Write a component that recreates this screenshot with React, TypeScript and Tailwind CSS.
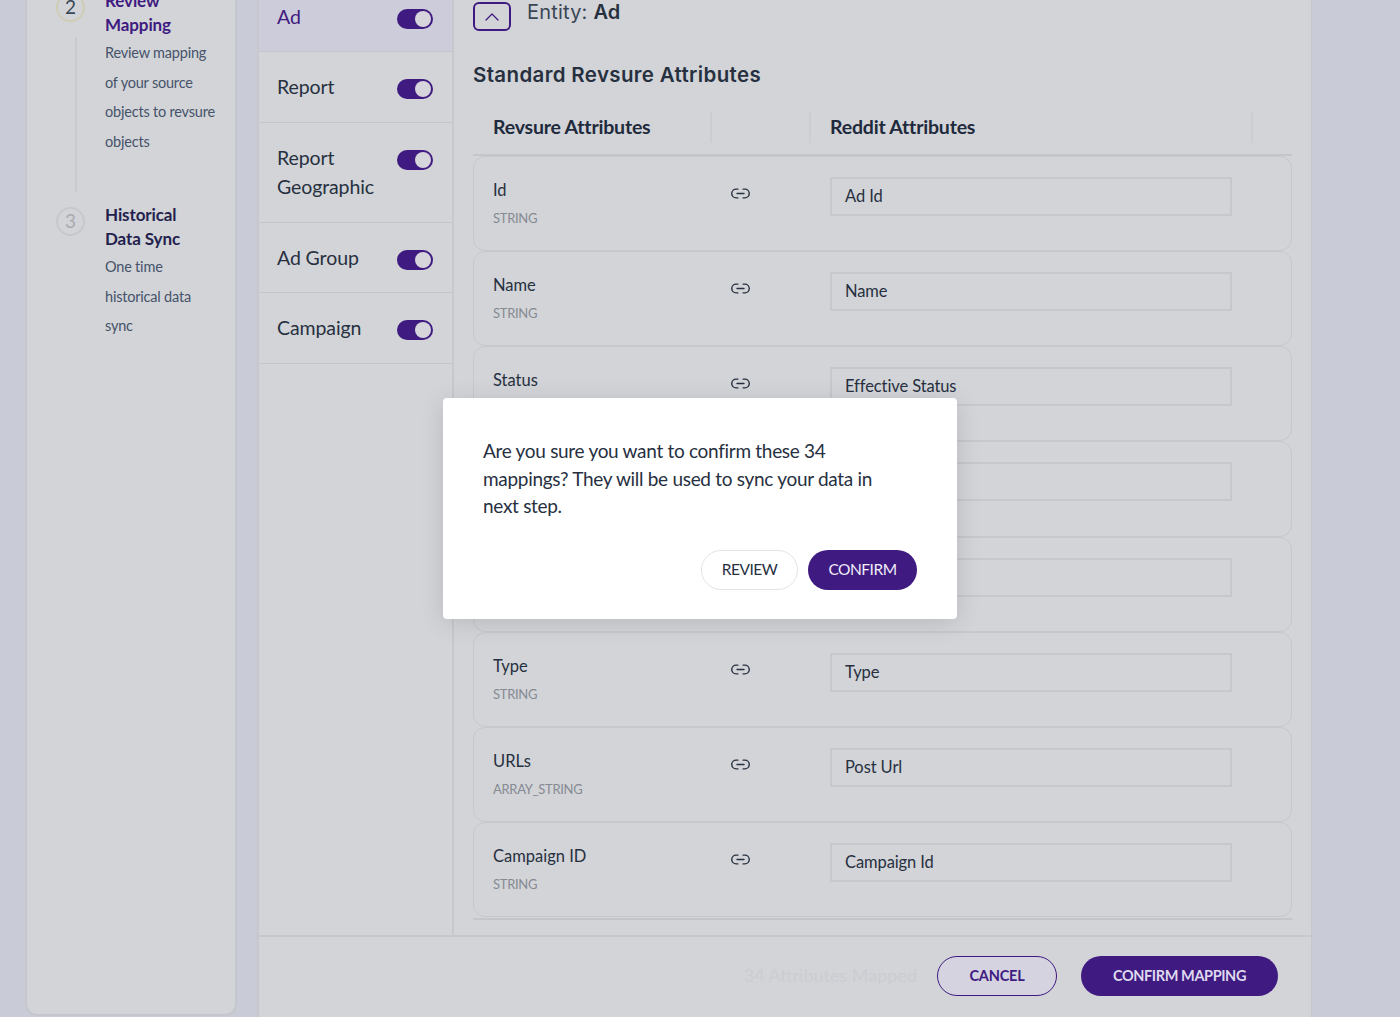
import { ChevronUp, Link2 } from 'lucide-react';

const ENTITIES = [
  { name: 'Ad', selected: true },
  { name: 'Report' },
  { name: 'Report Geographic' },
  { name: 'Ad Group' },
  { name: 'Campaign' },
];

// rows 4 and 5 sit behind the dialog, only their empty right part shows
const ATTRIBUTES = [
  { name: 'Id', type: 'STRING', value: 'Ad Id' },
  { name: 'Name', type: 'STRING', value: 'Name' },
  { name: 'Status', type: '', value: 'Effective Status' },
  { name: '', type: '', value: '' },
  { name: '', type: '', value: '' },
  { name: 'Type', type: 'STRING', value: 'Type' },
  { name: 'URLs', type: 'ARRAY_STRING', value: 'Post Url' },
  { name: 'Campaign ID', type: 'STRING', value: 'Campaign Id' },
];

const FONT = "font-['Lato','Noto_Sans',sans-serif]";

function Toggle() {
  return (
    <div className="mt-[7px] flex h-5 w-9 shrink-0 items-center justify-end rounded-full bg-[#3f1a80] pr-[2px]">
      <div className="h-4 w-4 rounded-full bg-[#d6d5dc]" />
    </div>
  );
}

function Step({ num, title, lines, active }: { num: number; title: string[]; lines: string[]; active?: boolean }) {
  return (
    <div className="flex">
      <div
        className={
          active
            ? 'mt-[4px] flex h-[29px] w-[29px] shrink-0 items-center justify-center rounded-full border-2 border-[#cfcdb5] text-[19px] text-[#3a4654]'
            : 'mt-[4px] flex h-[29px] w-[29px] shrink-0 items-center justify-center rounded-full border-2 border-[#c6c8cc] text-[19px] text-[#a9abb0]'
        }
      >
        {num}
      </div>
      <div className="ml-5">
        <div
          className={
            active
              ? 'text-[17px] leading-6 font-bold tracking-[-0.1px] text-[#3f1a80]'
              : 'text-[17px] leading-6 font-bold tracking-[-0.1px] text-[#241f4d]'
          }
        >
          {title.map((t) => (
            <div key={t}>{t}</div>
          ))}
        </div>
        <div className="mt-[1px] text-[14.5px] leading-[29.7px] tracking-[-0.2px] text-[#46536a]">
          {lines.map((l) => (
            <div key={l}>{l}</div>
          ))}
        </div>
      </div>
    </div>
  );
}

export default function App() {
  return (
    <div className={`relative flex h-[1017px] overflow-hidden bg-[#c9ccd6] pl-[25px] ${FONT}`}>
      {/* Stepper */}
      <div className="relative h-[1016px] w-[212px] shrink-0 overflow-hidden rounded-b-xl border-2 border-t-0 border-[#c4c7cd] bg-[#d2d4d8] pl-[29px]">
        <div className="-mt-[11px]">
          <Step
            num={2}
            active
            title={['Review', 'Mapping']}
            lines={['Review mapping', 'of your source', 'objects to revsure', 'objects']}
          />
        </div>
        <div className="mt-[46px]">
          <Step num={3} title={['Historical', 'Data Sync']} lines={['One time', 'historical data', 'sync']} />
        </div>
        <div className="absolute top-[37px] left-[48px] h-[155px] w-[2px] bg-[#c8cacf]" />
      </div>

      {/* Main */}
      <div className="ml-[20px] flex h-[1017px] w-[1055px] shrink-0 flex-col border-r border-l-2 border-r-[#c4c7cd] border-l-[#c6c8cd] bg-[#d2d4d8]">
        <div className="flex min-h-0 flex-1">
          {/* Entity list */}
          <div className="w-[195px] shrink-0 border-r-2 border-[#c6c8cd]">
            <div className="-mt-[18.5px]">
              {ENTITIES.map((e) => (
                <div
                  key={e.name}
                  className={
                    e.selected
                      ? 'flex items-start justify-between border-b border-[#c4c6cb] bg-[#cdccda] py-5 pr-[19px] pl-[18px] text-[19.5px] leading-[29.5px] tracking-[-0.1px] text-[#3f1a80]'
                      : 'flex items-start justify-between border-b border-[#c4c6cb] py-5 pr-[19px] pl-[18px] text-[19.5px] leading-[29.5px] tracking-[-0.1px] text-[#27303f]'
                  }
                >
                  <span className="w-[100px]">{e.name}</span>
                  <Toggle />
                </div>
              ))}
            </div>
          </div>

          {/* Attributes */}
          <div className="min-w-0 flex-1 px-[19px]">
            <div className="flex items-start pt-[2px]">
              <button className="flex h-[29px] w-[38px] items-center justify-center rounded-md border-2 border-[#3f1a80] text-[#3f1a80]">
                <ChevronUp size={24} strokeWidth={1.3} />
              </button>
              <div className="-mt-[4px] ml-4 font-['Inter',sans-serif] text-[20px] leading-7 tracking-[0.2px] text-[#3a4654]">
                Entity: <span className="font-semibold text-[#27303f]">Ad</span>
              </div>
            </div>
            <h2 className="mt-[30px] font-['Inter',sans-serif] text-[20.5px] leading-7 font-semibold tracking-[0.35px] text-[#27303f]">
              Standard Revsure Attributes
            </h2>
            <div className="mt-[23px] flex h-[44px] items-start border-b-2 border-[#c4c6cb] pl-5 text-[19.5px] leading-[29px] font-bold tracking-[-0.2px] text-[#1f2a3c]">
              <div className="h-[31px] w-[219px] border-r-2 border-[#cbcdd1]">Revsure Attributes</div>
              <div className="h-[31px] w-[99px] border-r-2 border-[#cbcdd1]" />
              <div className="h-[31px] w-[442px] border-r-2 border-[#cbcdd1] pl-[19px]">Reddit Attributes</div>
            </div>
            <div className="border-b-2 border-[#c4c6cb] pb-[1px]">
              {ATTRIBUTES.map((a, i) => (
                <div key={i} className="flex h-[95.14px] rounded-xl border border-[#c6c8cc] pt-[20px] pl-[19px]">
                  <div className="w-[237px] shrink-0">
                    <div className="-mt-px h-[28px] text-[16.5px] leading-7 text-[#27303f]">{a.name}</div>
                    <div className="mt-[4px] text-[13px] leading-5 tracking-[-0.3px] text-[#868a92]">{a.type}</div>
                  </div>
                  <Link2 size={21} strokeWidth={1.6} className="mt-[6px] shrink-0 text-[#27303f]" />
                  <div className="ml-[79px] flex h-[39px] w-[402px] shrink-0 items-center border-2 border-[#c6c8cc] pl-[13px] text-[16.5px] tracking-[-0.1px] text-[#27303f]">
                    {a.value}
                  </div>
                </div>
              ))}
            </div>
          </div>
        </div>

        {/* Footer */}
        <div className="flex h-[82px] shrink-0 items-center justify-end border-t-2 border-[#c6c8cd] pr-[33px] pb-[3px]">
          <span className="mr-5 text-[18px] text-[#cbcdd2]">34 Attributes Mapped</span>
          <button className="h-10 w-[120px] rounded-full border-[1.5px] border-[#3f1a80] bg-[#d5d3e0] text-[14.5px] font-bold tracking-[-0.2px] text-[#3f1a80]">
            CANCEL
          </button>
          <button className="ml-[24px] h-10 w-[197px] rounded-full bg-[#3f1a80] text-[14.5px] font-bold tracking-[-0.4px] text-[#ded9ee]">
            CONFIRM MAPPING
          </button>
        </div>
      </div>

      {/* Confirm dialog */}
      <div className="absolute inset-0 flex items-center justify-center">
        <div className="h-[221px] w-[514px] rounded-sm bg-white px-10 pt-[39px] shadow-[0_4px_24px_rgba(0,0,0,0.12)]">
          <p className="pr-[25px] text-[19px] leading-[27.5px] tracking-[-0.3px] text-[#27303f]">
            Are you sure you want to confirm these 34 mappings? They will be used to sync your data in next step.
          </p>
          <div className="mt-[30px] flex justify-end gap-[10px]">
            <button className="h-10 w-[97px] rounded-full border border-[#e4e4e8] bg-white text-[15.5px] tracking-[-0.5px] text-[#27303f]">
              REVIEW
            </button>
            <button className="h-10 w-[109px] rounded-full bg-[#3f1a80] text-[15.5px] tracking-[-0.5px] text-[#f0ecf8]">
              CONFIRM
            </button>
          </div>
        </div>
      </div>
    </div>
  );
}
